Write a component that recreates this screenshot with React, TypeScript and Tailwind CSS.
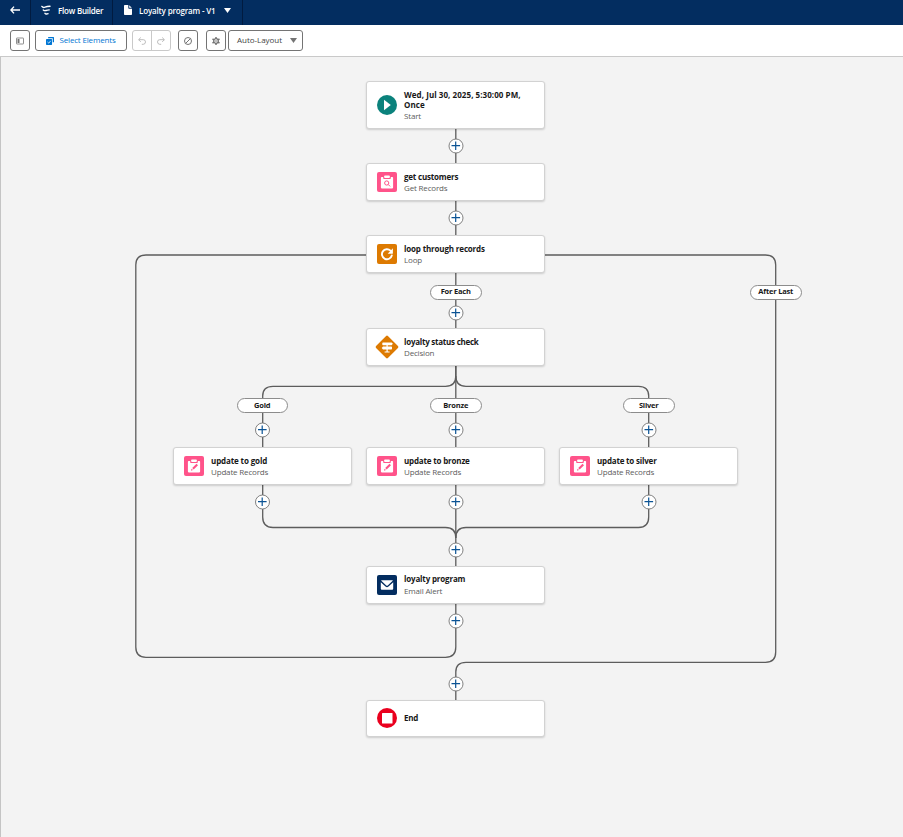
import React from "react";

type Kind = "start" | "get" | "loop" | "decision" | "update" | "email" | "end";

interface FlowNode {
  x: number;
  y: number;
  h: number;
  kind: Kind;
  title: string;
  sub?: string;
  tracking: string;
  pad: string;
}

const HEADER = 57;

const nodes: FlowNode[] = [
  { x: 366, y: 81, h: 48, kind: "start", title: "Wed, Jul 30, 2025, 5:30:00 PM, Once", sub: "Start", tracking: "tracking-[0.06px]", pad: "pt-[1px]" },
  { x: 366, y: 163, h: 38, kind: "get", title: "get customers", sub: "Get Records", tracking: "tracking-[-0.2px]", pad: "pt-[1px]" },
  { x: 366, y: 235, h: 38, kind: "loop", title: "loop through records", sub: "Loop", tracking: "tracking-[-0.16px]", pad: "pt-[1px]" },
  { x: 366, y: 328, h: 38, kind: "decision", title: "loyalty status check", sub: "Decision", tracking: "tracking-[-0.25px]", pad: "pt-[1px]" },
  { x: 173, y: 447, h: 38, kind: "update", title: "update to gold", sub: "Update Records", tracking: "tracking-[-0.13px]", pad: "pt-[1px]" },
  { x: 366, y: 447, h: 38, kind: "update", title: "update to bronze", sub: "Update Records", tracking: "tracking-[-0.18px]", pad: "pt-[1px]" },
  { x: 559, y: 447, h: 38, kind: "update", title: "update to silver", sub: "Update Records", tracking: "tracking-[-0.2px]", pad: "pt-[1px]" },
  { x: 366, y: 566, h: 38, kind: "email", title: "loyalty program", sub: "Email Alert", tracking: "tracking-[-0.17px]", pad: "gap-px pt-0" },
  { x: 366, y: 700, h: 37, kind: "end", title: "End", tracking: "tracking-[-0.2px]", pad: "pb-[1px]" },
];

const pills = [
  { x: 429.7, y: 284.5, w: 52, label: "For Each" },
  { x: 749.7, y: 284.5, w: 52, label: "After Last" },
  { x: 236.7, y: 398.2, w: 51, label: "Gold" },
  { x: 429.7, y: 398.2, w: 52, label: "Bronze" },
  { x: 622.7, y: 398.2, w: 52, label: "Silver" },
];

const pluses = [
  [456, 146], [456, 218], [456, 313], [262.5, 430], [456, 430], [649, 430],
  [262.5, 502], [456, 502], [649, 502], [456, 550], [456, 621], [456, 684],
];

function Clipboard({ children }: { children: React.ReactNode }) {
  return (
    <>
      <rect width="20" height="20" rx="2" fill="#ff538a" />
      <path d="M4.7 5h1.500v1.300q0 .8.8.8h6q.8 0 .8-.8V5h1.500q.8 0 .8.8v9.800q0 .8-.8.8H4.700q-.8 0-.8-.8V5.800q0-.8.8-.8z" fill="#fff" />
      <rect x="7.200" y="3.500" width="5.600" height="2.500" rx=".7" fill="#fff" />
      {children}
    </>
  );
}

function NodeIcon({ kind }: { kind: Kind }) {
  return (
    <svg viewBox="0 0 20 20" className="-mt-[0.5px] size-5 shrink-0 overflow-visible">
      {kind === "start" && (
        <>
          <circle cx="10" cy="10" r="10" fill="#0b827c" />
          <path d="M7 4.800 13.800 10 7 15.200z" fill="#fff" />
        </>
      )}
      {kind === "get" && (
        <Clipboard>
          <circle cx="9.700" cy="11" r="2.100" fill="none" stroke="#ff538a" strokeWidth="1" />
          <path d="m11.300 12.600 1.800 1.800" stroke="#ff538a" strokeWidth="1" />
        </Clipboard>
      )}
      {kind === "update" && (
        <Clipboard>
          <path d="m7 14.700.500-2 1.500 1.400zM8.200 12l4.300-4.300 1.500 1.500-4.300 4.300z" fill="#ff538a" />
        </Clipboard>
      )}
      {kind === "loop" && (
        <>
          <rect width="20" height="20" rx="2" fill="#dd7a01" />
          <path d="M13.500 6.700A5 5 0 1 0 14.800 11.500" fill="none" stroke="#fff" strokeWidth="1.900" strokeLinecap="round" />
          <path d="M15.900 4.200v5.100q0 .4-.4.400h-4.800z" fill="#fff" />
        </>
      )}
      {kind === "decision" && (
        <>
          <rect x="1.600" y="1.600" width="16.800" height="16.800" rx="1.300" fill="#dd7a01" transform="rotate(45 10 10)" />
          <path d="M6 5.400h8.600l1.300 1.400-1.300 1.400H6q-.7 0-.7-.6V6q0-.6.7-.6zM14.300 9.600H6L4.700 11 6 12.400h8.300q.7 0 .7-.6v-1.600q0-.6-.7-.6zM9.500 8.200h1.200v1.400H9.500zM9.500 12.400h1.200v2.100H9.500zM7.600 14.400h5v1.200h-5z" fill="#fff" />
        </>
      )}
      {kind === "email" && (
        <>
          <rect width="20" height="20" rx="2" fill="#032d60" />
          <path d="M4.500 5.300h11q.6 0 .2.500l-5 4.600q-.7.600-1.400 0l-5-4.600q-.4-.5.200-.5z" fill="#fff" />
          <path d="M3.800 7.300l4.700 4.300q1.500 1.200 3 0l4.700-4.300v6.400q0 1-1 1H4.800q-1 0-1-1z" fill="#fff" />
        </>
      )}
      {kind === "end" && (
        <>
          <circle cx="10" cy="10" r="10" fill="#ea001e" />
          <rect x="5" y="5" width="10.500" height="10.500" rx=".5" fill="#fff" />
        </>
      )}
    </svg>
  );
}

function Card({ node }: { node: FlowNode }) {
  return (
    <div
      className="absolute flex w-[179px] items-center rounded-[3px] border border-[#d2d2d2] bg-white pl-[10px] shadow-[0_1px_2px_rgba(0,0,0,0.16)]"
      style={{ left: node.x, top: node.y - HEADER, height: node.h }}
    >
      <NodeIcon kind={node.kind} />
      <div className={`ml-[7px] flex w-[130px] flex-col text-[8px] leading-[11px] ${node.pad}`}>
        <div className={`font-bold leading-[10px] text-[#181818] ${node.tracking}`}>{node.title}</div>
        {node.sub && <div className="tracking-[-0.17px] text-[#5c5c5c]">{node.sub}</div>}
      </div>
    </div>
  );
}

function Connectors() {
  return (
    <svg viewBox="0 57 903 780" className="absolute inset-0 h-[780px] w-[903px]" fill="none" stroke="#5c5c5c" strokeWidth="1.300">
      <path d="M455.800 129V366M455.800 366V566M455.800 604V647Q455.800 657.300 445.500 657.300H146Q135.800 657.300 135.800 647V265Q135.800 255 146 255H367" />
      <path d="M544 255H765.500Q775.700 255 775.700 265V652Q775.700 662.300 765.500 662.300H466Q455.800 662.300 455.800 672V700" />
      <path d="M455.800 366V376Q455.800 386.300 445.500 386.300H273Q262.700 386.300 262.700 396V517Q262.700 527.500 273 527.500H445.500Q455.800 527.500 455.800 538" />
      <path d="M455.800 376Q455.800 386.300 466 386.300H638.500Q648.700 386.300 648.700 396V517Q648.700 527.500 638.500 527.500H466Q455.800 527.500 455.800 538" />
    </svg>
  );
}

function PlusButtons() {
  return (
    <svg viewBox="0 57 903 780" className="absolute inset-0 h-[780px] w-[903px]">
      {pluses.map(([x, y]) => (
        <g key={`${x}-${y}`}>
          <circle cx={x} cy={y} r="7" fill="#fff" stroke="#747474" strokeWidth=".9" />
          <path d={`M${x - 4.5} ${y - 0.3}h8.600M${x - 0.3} ${y - 4.5}v8.600`} stroke="#0b5394" strokeWidth="1.200" />
        </g>
      ))}
    </svg>
  );
}

export default function App() {
  return (
    <div className="flex h-[837px] w-[903px] flex-col overflow-hidden bg-[#f3f3f3] font-['Open_Sans','Noto_Sans',sans-serif] text-[8px]">
      <header className="flex h-[25px] shrink-0 bg-[#032d60] text-[8px] font-semibold tracking-[-0.22px] text-white">
        <div className="flex w-[31px] justify-center border-r border-[#011b40] pt-[6px]">
          <svg viewBox="0 0 10 8" className="h-2 w-[10px]" fill="none" stroke="#fff" strokeWidth="1.400">
            <path d="M4 .6.900 4 4 7.400M1 4h9" />
          </svg>
        </div>
        <div className="flex w-[82px] border-r border-[#011b40] pl-[10px]">
          <svg viewBox="0 0 10 10" className="mt-[5px] size-[10px]" fill="none" stroke="#fff" strokeWidth="1.400" strokeLinecap="round">
            <path d="M.9 1.400Q2 2.900 4 2.200T9 1.300M2.300 4.900Q3.500 6 5 5.500T8.200 4.900M4 8.300Q4.700 9.300 5.500 9T7 8.600" />
          </svg>
          <span className="ml-[7px] whitespace-nowrap leading-[21px]">Flow Builder</span>
        </div>
        <div className="flex w-[130px] border-r border-[#011b40] pl-[11px]">
          <svg viewBox="0 0 8 10" className="mt-[5px] h-[10px] w-2" fill="#fff">
            <path d="M.8 0h3.500v3q0 .7.700.7h3v5.500q0 .8-.8.8H.8Q0 10 0 9.200V.8Q0 0 .8 0zM5.200.2 7.800 2.800H5.200z" />
          </svg>
          <span className="ml-[7px] whitespace-nowrap leading-[21px] tracking-[-0.16px]">Loyalty program - V1</span>
          <svg viewBox="0 0 7 5" className="ml-auto mr-[11px] mt-[8px] h-[5px] w-[7px]" fill="#fff">
            <path d="M0 0h7L3.500 5z" />
          </svg>
        </div>
      </header>

      <div className="flex h-[32px] shrink-0 items-start border-b border-[#c9c9c9] bg-white pl-[10px] pt-[5px] text-[#444]">
        <button className="flex h-[21px] w-5 items-center justify-center rounded-[3px] border border-[#747474]">
          <svg viewBox="0 0 8 8" className="size-2">
            <rect x=".5" y="1" width="7" height="6" rx=".4" fill="none" stroke="#747474" strokeWidth=".8" />
            <path d="M1.500 2h2v4h-2z" fill="#747474" />
          </svg>
        </button>
        <button className="ml-[5px] flex h-[21px] w-[92px] items-center rounded-[3px] border border-[#747474] pl-[10px] text-[#0176d3]">
          <svg viewBox="0 0 9 9" className="size-[8px]">
            <path d="M3 0h5.300q.7 0 .7.700V6H7.600V1.500H2.300V.7Q2.300 0 3 0z" fill="#0176d3" />
            <rect y="2.300" width="6.800" height="6.700" rx=".8" fill="#0176d3" />
            <path d="m1.700 5.600 1.400 1.300L5.300 4.300" stroke="#fff" strokeWidth=".9" fill="none" />
          </svg>
          <span className="ml-[5.5px] whitespace-nowrap pb-[2px] tracking-[-0.17px]">Select Elements</span>
        </button>
        <div className="ml-[5px] flex h-[21px] w-[39px] rounded-[3px] border border-[#c9c9c9]">
          <button className="flex w-[19px] items-center justify-center border-r border-[#c9c9c9]">
            <svg viewBox="0 0 8 8" className="size-2" fill="none" stroke="#b4b4b4" strokeWidth=".9">
              <path d="M2.800.5.600 2.700l2.200 2.200M.8 2.700h4.500q2.200 0 2.200 2.200T5.300 7.300H3.800" />
            </svg>
          </button>
          <button className="flex flex-1 items-center justify-center">
            <svg viewBox="0 0 8 8" className="size-2" fill="none" stroke="#b4b4b4" strokeWidth=".9">
              <path d="m5.200.5 2.200 2.200-2.200 2.200M7.200 2.700H2.700Q.5 2.700.5 4.900t2.200 2.400h1.500" />
            </svg>
          </button>
        </div>
        <button className="ml-[7px] flex h-[21px] w-5 items-center justify-center rounded-[3px] border border-[#747474]">
          <svg viewBox="0 0 8 8" className="size-2" fill="none" stroke="#747474" strokeWidth="1">
            <circle cx="4" cy="4" r="3.500" />
            <path d="m6.400 1.600-4.800 4.800" />
          </svg>
        </button>
        <button className="ml-[8px] flex h-[21px] w-5 items-center justify-center rounded-[3px] border border-[#747474]">
          <svg viewBox="0 0 8 8" className="size-2" fill="none" stroke="#747474">
            <circle cx="4" cy="4" r="2.300" strokeWidth="1.300" />
            <path d="M4 0v1.800M4 6.200V8M.5 2l1.600.9M5.900 5.100l1.600.9M7.500 2l-1.600.9M2.100 5.100.5 6" strokeWidth="1.500" />
            <circle cx="4" cy="4" r=".8" fill="#747474" stroke="none" />
          </svg>
        </button>
        <button className="ml-[2px] flex h-[21px] w-[75px] items-center justify-between rounded-[3px] border border-[#747474] pl-[8px] pr-[5px]">
          <span className="whitespace-nowrap pb-[2px] tracking-[-0.03px]">Auto-Layout</span>
          <svg viewBox="0 0 7 5" className="h-[5px] w-[7px]" fill="#747474">
            <path d="M0 0h7L3.500 5z" />
          </svg>
        </button>
      </div>

      <main className="relative flex-1 overflow-hidden border-l border-[#c4c4c4]">
        <div className="absolute -left-px top-0 h-[780px] w-[903px]">
          <Connectors />
          {nodes.map((n) => (
            <Card key={n.title} node={n} />
          ))}
          {pills.map((p) => (
            <div
              key={p.label}
              className="absolute flex h-[15px] items-center justify-center whitespace-nowrap rounded-full border border-[#8c8c8c] bg-white text-[7.500px] font-bold tracking-[-0.2px] text-[#181818]"
              style={{ left: p.x, top: p.y - HEADER, width: p.w }}
            >
              {p.label}
            </div>
          ))}
          <PlusButtons />
        </div>
      </main>
    </div>
  );
}
